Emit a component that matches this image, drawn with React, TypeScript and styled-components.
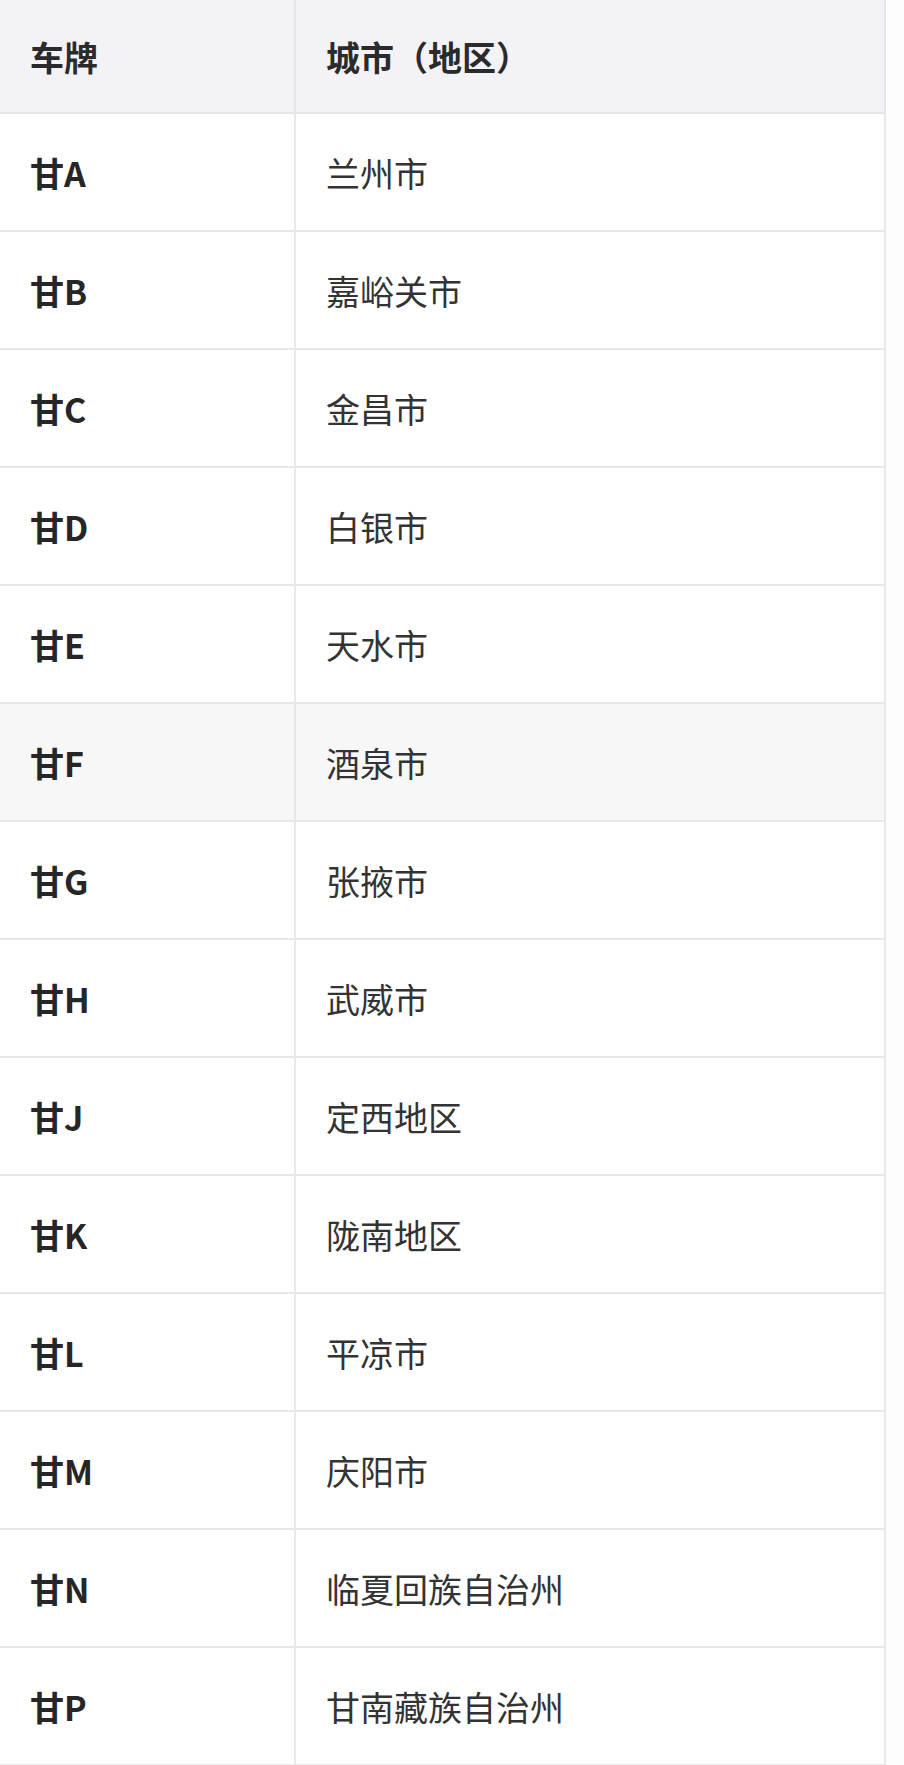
import React from 'react'
import styled, { createGlobalStyle } from 'styled-components'

const GlobalStyle = createGlobalStyle`
  body {
    margin: 0;
    background: #fdfdfd;
    font-family: "Noto Sans CJK SC", "Noto Sans", sans-serif;
  }
`

const Table = styled.table`
  width: 886px;
  border-collapse: collapse;
  table-layout: fixed;
  color: #2b2b2b;
  font-size: 34px;
  background: #ffffff;
`

const HeadCell = styled.th<{ $width?: number }>`
  width: ${({ $width }) => ($width ? `${$width}px` : 'auto')};
  height: 113px;
  padding: 0 0 0 30px;
  box-sizing: border-box;
  text-align: left;
  font-weight: 700;
  background: #f3f3f7;
  border: 2px solid #e6e6e8;
  border-top: none;
  border-left: none;
`

const Row = styled.tr<{ $shaded?: boolean }>`
  background: ${({ $shaded }) => ($shaded ? '#f7f7f7' : '#ffffff')};
`

const Cell = styled.td<{ $bold?: boolean }>`
  height: 118px;
  padding: 0 0 0 30px;
  box-sizing: border-box;
  font-weight: ${({ $bold }) => ($bold ? 700 : 400)};
  color: ${({ $bold }) => ($bold ? '#262626' : '#333333')};
  border: 2px solid #e8e8e8;
  border-left: none;
`

const plates: [string, string][] = [
  ['甘A', '兰州市'],
  ['甘B', '嘉峪关市'],
  ['甘C', '金昌市'],
  ['甘D', '白银市'],
  ['甘E', '天水市'],
  ['甘F', '酒泉市'],
  ['甘G', '张掖市'],
  ['甘H', '武威市'],
  ['甘J', '定西地区'],
  ['甘K', '陇南地区'],
  ['甘L', '平凉市'],
  ['甘M', '庆阳市'],
  ['甘N', '临夏回族自治州'],
  ['甘P', '甘南藏族自治州'],
]

export default function App() {
  return (
    <>
      <GlobalStyle />
      <Table>
        <thead>
          <tr>
            <HeadCell $width={295}>车牌</HeadCell>
            <HeadCell>城市（地区）</HeadCell>
          </tr>
        </thead>
        <tbody>
          {plates.map(([plate, city]) => (
            <Row key={plate} $shaded={plate === '甘F'}>
              <Cell $bold>{plate}</Cell>
              <Cell>{city}</Cell>
            </Row>
          ))}
        </tbody>
      </Table>
    </>
  )
}
